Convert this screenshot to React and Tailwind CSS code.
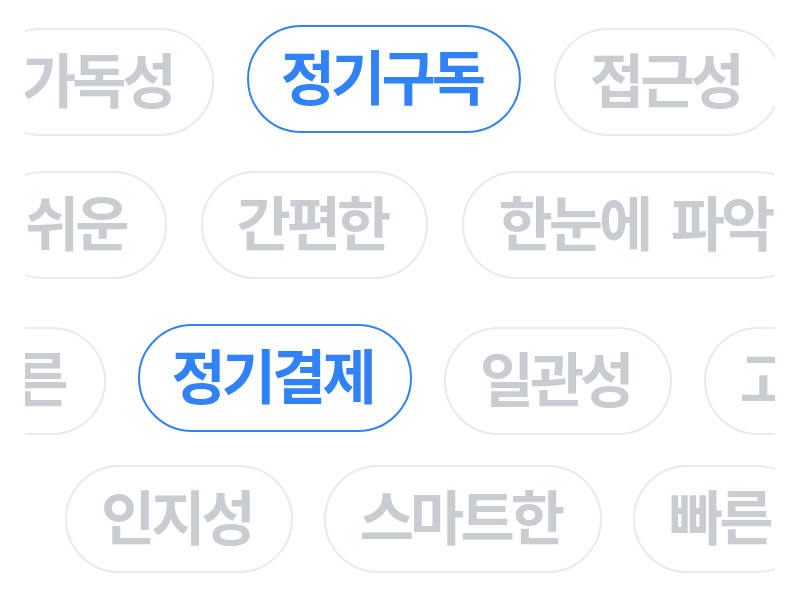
import React from "react";

const rows = [
  { cls: "mt-[25px] -ml-[39px] gap-[33px]", items: [["가독성"], ["정기구독", true], ["접근성"], ["편리한"]] },
  { cls: "mt-[35px] -ml-[36px] gap-[34px]", items: [["쉬운"], ["간편한"], ["한눈에 파악"], ["깔끔한"]] },
  { cls: "mt-[45px] -ml-[97px] gap-[32px]", items: [["빠른"], ["정기결제", true], ["일관성"], ["고급스러운"]] },
  { cls: "mt-[30px] ml-[40px] gap-[31px]", items: [["인지성"], ["스마트한"], ["빠른"], ["안전한"]] },
];

function Pill({ label, active }) {
  return (
    <div
      className={
        active
          ? "shrink-0 h-[108px] mb-[3px] pb-[10px] flex items-center rounded-full border-[2.5px] border-[#3182f6] pl-[32px] pr-[37px] text-[#3182f6] whitespace-nowrap"
          : "shrink-0 h-[108px] pb-[10px] flex items-center rounded-full border-2 border-[#e8eaed] pl-[34px] pr-[39px] text-[#c9cdd2] whitespace-nowrap"
      }
    >
      <span className="text-[59px] leading-none font-semibold tracking-[-4px] [word-spacing:12px]">{label}</span>
    </div>
  );
}

export default function App() {
  return (
    <div
      className="w-[800px] h-[600px] bg-white overflow-hidden"
      style={{ fontFamily: '"Noto Sans CJK KR", "Noto Sans", sans-serif' }}
    >
      <div className="mx-[25px] w-[750px] h-[600px] overflow-hidden flex flex-col">
        {rows.map((r, i) => (
          <div key={i} className={"flex items-end shrink-0 " + r.cls}>
            {r.items.map(([label, active], j) => (
              <Pill key={j} label={label} active={!!active} />
            ))}
          </div>
        ))}
      </div>
    </div>
  );
}
